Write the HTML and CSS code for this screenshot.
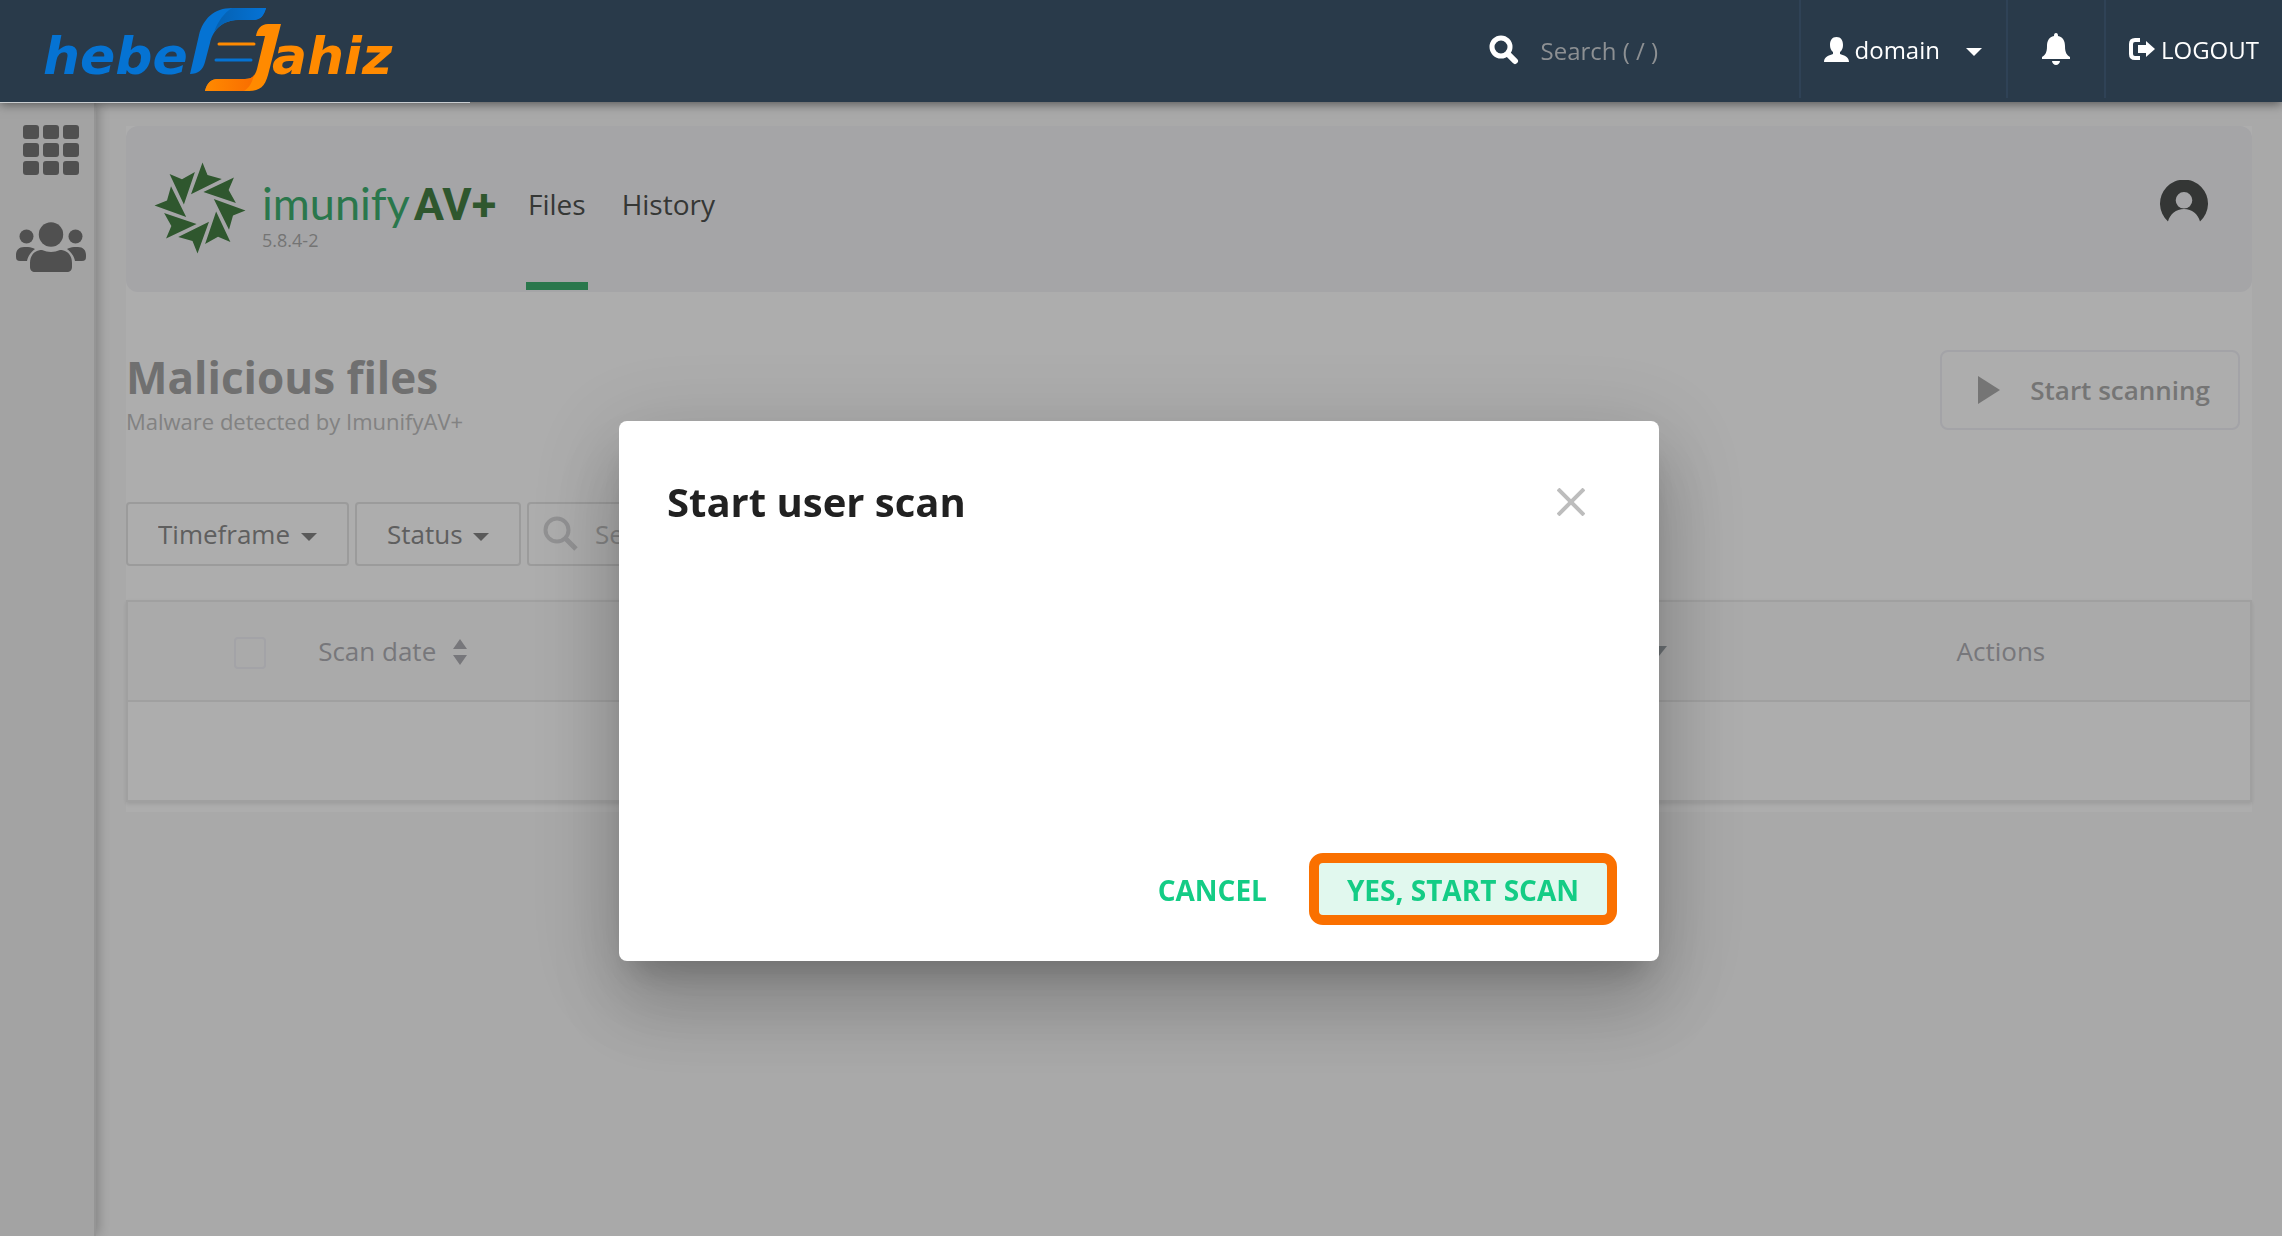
FILE: index.html
```html
<!DOCTYPE html>
<html lang="en">
<head>
    <meta charset="UTF-8">
    <meta name="viewport" content="width=device-width, initial-scale=1.0">
    <title>ImunifyAV+</title>
    <link rel="stylesheet" href="styles.css">
</head>
<body>
    <!-- Top bar -->
    <header class="topbar">
        <a href="#" class="brand" aria-label="hebel Jahiz">
            <svg width="470" height="102" viewBox="0 0 470 102">
                <defs>
                    <linearGradient id="blueFold" x1="0" x2="1"><stop offset="0" stop-color="#0560b0"/><stop offset="1" stop-color="#0573d6"/></linearGradient>
                    <linearGradient id="orangeFold" x1="0" x2="1"><stop offset="0" stop-color="#ff8a00"/><stop offset="1" stop-color="#f96d00"/></linearGradient>
                </defs>
                <text class="brand-text" x="43" y="74" fill="#0573d3">hebe</text>
                <path fill="#0573d3" d="M190 74 L199 35 C203 19 214 8 232 8 L266 8 C264 15 261 20 253 20 L238 20 C224 20 213 29 210 43 L205 62 C203 70 198 74 190 74Z"/>
                <path fill="url(#blueFold)" d="M232 8 L266 8 C264 15 261 20 253 20 L238 20 C228 20 220 24 214 32 C218 21 224 13 232 8Z"/>
                <path stroke="#ff8a00" stroke-width="3" stroke-linecap="round" d="M219 44H254"/>
                <path stroke="#0573d3" stroke-width="3" stroke-linecap="round" d="M216 60H251"/>
                <path fill="#ff8a00" d="M256 36 C257 29 261 24 268 24 L281 24 L268 75 C265 86 260 91 249 91 L205 91 C207 83 211 79 218 79 L245 79 C252 79 255 76 257 69 L265 36Z"/>
                <path fill="url(#orangeFold)" d="M218 79 L245 79 C249 79 252 78 254 75 C252 83 249 88 244 91 L205 91 C207 83 211 79 218 79Z"/>
                <text class="brand-text" x="272" y="74" fill="#ff8a00">ahiz</text>
            </svg>
        </a>
        <label class="top-search">
            <svg width="30" height="30" viewBox="0 0 30 30" fill="none" stroke="#fff"><circle cx="12" cy="12" r="9" stroke-width="5"/><path d="M19 19L26 26" stroke-width="6" stroke-linecap="round"/></svg>
            <input type="search" placeholder="Search ( / )" aria-label="Search">
        </label>
        <button class="top-item user-menu">
            <svg width="25" height="25" viewBox="0 0 25 25" fill="#fff"><path d="M12.500 0C17 0 19 3.500 19 8c0 3-1 5.500-3 7v2c3 1.500 9 2 9 8H0c0-6 6-6.500 9-8v-2c-2-1.500-3-4-3-7C6 3.500 8 0 12.500 0Z"/></svg>
            <span>domain</span>
            <svg class="caret" width="16" height="8" viewBox="0 0 16 8" fill="#fff"><path d="M0 0H16L8 8Z"/></svg>
        </button>
        <button class="top-item bell" aria-label="Notifications">
            <svg width="28" height="32" viewBox="0 0 28 32" fill="#fff"><path d="M14 0c1.500 0 2 1 2 3 5 1 7 5 7 10 0 7 2 9 5 11v2H0v-2c3-2 5-4 5-11 0-5 2-9 7-10 0-2 .5-3 2-3ZM10 28h8c0 2-2 4-4 4s-4-2-4-4Z"/></svg>
        </button>
        <a href="#" class="top-item logout">
            <svg width="26" height="22" viewBox="0 0 26 22"><path d="M11 2H6C3.500 2 2 3.500 2 6v10c0 2.500 1.500 4 4 4h5" fill="none" stroke="#fff" stroke-width="4"/><path d="M9 7h8V3l9 8-9 8v-4H9Z" fill="#fff"/></svg>
            <span>LOGOUT</span>
        </a>
    </header>

    <div class="layout">
        <!-- Sidebar -->
        <nav class="sidebar">
            <a href="#" aria-label="Tools">
                <svg width="56" height="50" viewBox="0 0 56 50" fill="#777">
                    <rect width="16" height="14" rx="3"/><rect x="20" width="16" height="14" rx="3"/><rect x="40" width="16" height="14" rx="3"/>
                    <rect y="18" width="16" height="14" rx="3"/><rect x="20" y="18" width="16" height="14" rx="3"/><rect x="40" y="18" width="16" height="14" rx="3"/>
                    <rect y="36" width="16" height="14" rx="3"/><rect x="20" y="36" width="16" height="14" rx="3"/><rect x="40" y="36" width="16" height="14" rx="3"/>
                </svg>
            </a>
            <a href="#" aria-label="User manager">
                <svg width="70" height="50" viewBox="0 0 70 50" fill="#777">
                    <circle cx="35" cy="12.500" r="12.200"/><circle cx="10.500" cy="14.500" r="7"/><circle cx="59.500" cy="14.500" r="7"/>
                    <path d="M8 25h4c3 0 5 1 7 2-4 3-7 7-8 12H4c-3 0-4-1.500-4-4v-2c0-5 3-8 8-8ZM62 25h-4c-3 0-5 1-7 2 4 3 7 7 8 12h7c3 0 4-1.500 4-4v-2c0-5-3-8-8-8Z"/>
                    <path d="M26 28c3 1 6 2 9 2s6-1 9-2c8 0 12 6 12 13v4c0 3-2 5-5 5H19c-3 0-5-2-5-5v-4c0-7 4-13 12-13Z"/>
                </svg>
            </a>
        </nav>

        <main class="main">
            <div class="page">
                <section class="av-header">
                    <svg class="av-star" width="92" height="92" viewBox="-46 -46 92 92" fill="#468045">
                        <path id="blade" d="M2.500-45.500L7.500-33L21.800-29L-9-13.800Z"/>
                        <use href="#blade" transform="rotate(45)"/><use href="#blade" transform="rotate(90)"/>
                        <use href="#blade" transform="rotate(135)"/><use href="#blade" transform="rotate(180)"/>
                        <use href="#blade" transform="rotate(225)"/><use href="#blade" transform="rotate(270)"/>
                        <use href="#blade" transform="rotate(315)"/>
                    </svg>
                    <div class="av-name">
                        <div class="av-title"><span class="av-imunify">imunify</span><span class="av-plus">AV+</span></div>
                        <div class="av-version">5.8.4-2</div>
                    </div>
                    <nav class="tabs">
                        <a href="#" class="tab active">Files</a>
                        <a href="#" class="tab">History</a>
                    </nav>
                    <button class="avatar" aria-label="Account">
                        <svg width="48" height="48" viewBox="0 0 48 48"><path fill="#4d504e" fill-rule="evenodd" d="M8 41.500A24 24 0 1 1 40 41.500C38 34 32 29 24 29S10 34 8 41.500ZM24 12A8.300 8.300 0 1 0 24 28.600A8.300 8.300 0 1 0 24 12Z"/></svg>
                    </button>
                </section>

                <div class="heading">
                    <div>
                        <h1>Malicious files</h1>
                        <p>Malware detected by ImunifyAV+</p>
                    </div>
                    <button class="scan-btn">
                        <svg width="22" height="28" viewBox="0 0 22 28" fill="#adadad"><path d="M0 0L22 14L0 28Z"/></svg>
                        <span>Start scanning</span>
                    </button>
                </div>

                <div class="filters">
                    <select class="filter" aria-label="Timeframe"><option>Timeframe</option></select>
                    <select class="filter" aria-label="Status"><option>Status</option></select>
                    <label class="filter-search">
                        <svg width="36" height="36" viewBox="0 0 36 36" fill="none" stroke="#d7d7d9"><circle cx="14" cy="14" r="11.500" stroke-width="4"/><path d="M22 22L33 33" stroke-width="5"/></svg>
                        <input type="search" placeholder="Search" aria-label="Search files">
                    </label>
                </div>

                <table class="files">
                    <thead>
                        <tr>
                            <th class="col-check"><input type="checkbox" aria-label="Select all"></th>
                            <th class="col-date">Scan date <svg width="14" height="26" viewBox="0 0 14 26" fill="#b0b0b5"><path d="M0 10L7 0L14 10ZM0 16H14L7 26Z"/></svg></th>
                            <th class="col-status"><svg width="16" height="10" viewBox="0 0 16 10" fill="#a0a8ad"><path d="M0 0H16L8 10Z"/></svg></th>
                            <th class="col-actions">Actions</th>
                        </tr>
                    </thead>
                    <tbody>
                        <tr><td colspan="4"></td></tr>
                    </tbody>
                </table>
            </div>
        </main>
    </div>

    <!-- Scan dialog -->
    <div class="backdrop">
        <div class="dialog" role="dialog" aria-labelledby="dialogTitle">
            <div class="dialog-head">
                <h2 id="dialogTitle">Start user scan</h2>
                <button class="close" aria-label="Close">
                    <svg width="28" height="28" viewBox="0 0 28 28" stroke="#bdbdbd" stroke-width="4"><path d="M1 1L27 27M27 1L1 27"/></svg>
                </button>
            </div>
            <div class="dialog-actions">
                <button class="cancel">CANCEL</button>
                <button class="confirm">YES, START SCAN</button>
            </div>
        </div>
    </div>
</body>
</html>
```

FILE: styles.css
```css
* {
    box-sizing: border-box;
}
body {
    margin: 0;
    min-height: 100vh;
    display: flex;
    flex-direction: column;
    font-family: "Open Sans", sans-serif;
    font-size: 26px;
    background: #fafafa;
}
button, input, select {
    font: inherit;
    border: none;
    background: none;
    padding: 0;
}
button {
    cursor: pointer;
}
a {
    text-decoration: none;
    color: inherit;
}
svg {
    display: block;
    flex: none;
}

/* Top bar */
.topbar {
    position: relative;
    z-index: 20;
    display: flex;
    height: 102px;
    background: #293a4a;
    color: #fff;
    font-size: 24px;
    box-shadow: 0 2px 10px rgba(0, 0, 0, 0.5);
}
.brand {
    margin-right: auto;
    height: 103px;
    border-bottom: 1px solid #c9cdd0;
}
.brand-text {
    font: italic bold 52px "DejaVu Sans", sans-serif;
}
.top-search {
    display: flex;
    align-items: center;
    gap: 22px;
    width: 310px;
    height: 100px;
}
.top-search input {
    width: 220px;
    color: #fff;
    outline: none;
}
.top-search input::placeholder {
    color: #8d9093;
}
.top-item {
    display: flex;
    align-items: center;
    height: 98px;
    padding: 0 23px;
    border-left: 2px solid #2f4256;
    color: #fff;
}
.user-menu {
    gap: 6px;
    padding-right: 24px;
}
.caret {
    margin: 6px 0 0 20px;
}
.bell {
    padding: 0 34px;
}
.logout {
    gap: 6px;
}

/* Sidebar */
.layout {
    flex: 1;
    display: flex;
}
.sidebar {
    width: 96px;
    padding: 23px 0 0 7px;
    display: flex;
    flex-direction: column;
    align-items: center;
    gap: 47px;
    background: #f1f1f1;
    border-right: 2px solid #dcdcdc;
    box-shadow: 2px 0 12px rgba(0, 0, 0, 0.25);
}

/* Page */
.main {
    flex: 1;
    padding: 24px 30px;
}
.page {
    background: #fff;
    padding-bottom: 10px;
}
.av-header {
    display: flex;
    height: 166px;
    padding: 0 44px 0 28px;
    background: #f4f4f7;
    border-radius: 12px;
}
.av-star {
    margin-top: 36px;
}
.av-name {
    width: 232px;
    margin: 50px 32px 0 16px;
}
.av-title {
    display: flex;
    align-items: baseline;
    gap: 4px;
    height: 52px;
    line-height: 54px;
}
.av-imunify {
    font-family: Lato, sans-serif;
    font-size: 45px;
    color: #3eb070;
}
.av-plus {
    font-family: Roboto, sans-serif;
    font-size: 45px;
    font-weight: bold;
    color: #468045;
}
.av-version {
    font-size: 18px;
    line-height: 24px;
    color: #acacac;
}
.tabs {
    display: flex;
    gap: 32px;
    padding-bottom: 2px;
}
.tab {
    padding: 59px 2px 0;
    font-size: 28px;
    line-height: 38px;
    color: #4f524f;
    border-bottom: 8px solid transparent;
}
.tab.active {
    border-color: #3eb070;
}
.avatar {
    align-self: flex-start;
    margin: 54px 0 0 auto;
}

.heading {
    display: flex;
    justify-content: space-between;
    align-items: flex-start;
    padding: 58px 12px 0 0;
    height: 210px;
}
.heading h1 {
    margin: 0;
    font-size: 44px;
    line-height: 54px;
    color: #a5a5a5;
}
.heading p {
    margin: 0;
    font-size: 22px;
    line-height: 34px;
    color: #c0c0c0;
}
.scan-btn {
    display: flex;
    align-items: center;
    gap: 30px;
    height: 80px;
    padding: 0 28px 0 36px;
    border: 2px solid #f0f0f6;
    border-radius: 8px;
    font-weight: 600;
    color: #adadad;
}

.filters {
    display: flex;
    gap: 6px;
    margin-bottom: 34px;
}
.filter, .filter-search {
    height: 64px;
    border: 2px solid #e5e5e5;
    border-radius: 4px;
}
.filter {
    appearance: none;
    padding: 0 56px 0 30px;
    color: #8c8c8c;
    background: url("data:image/svg+xml,%3Csvg xmlns='http://www.w3.org/2000/svg' width='16' height='8'%3E%3Cpath d='M0 0H16L8 8Z' fill='%23858585'/%3E%3C/svg%3E") no-repeat right 30px top 29px;
}
.filter-search {
    display: flex;
    align-items: center;
    gap: 16px;
    width: 520px;
    padding: 0 14px;
}
.filter-search input::placeholder {
    color: #c2c2c2;
}

.files {
    width: 100%;
    table-layout: fixed;
    border-collapse: collapse;
    border: 2px solid #ececec;
    box-shadow: 0 2px 4px rgba(0, 0, 0, 0.1);
    color: #b0b0b5;
}
.files th {
    height: 100px;
    padding: 0;
    background: #fbfbfb;
    border-bottom: 2px solid #ececec;
    font-weight: normal;
    text-align: left;
}
.files td {
    height: 100px;
}
.files svg {
    display: inline-block;
    margin-left: 10px;
    vertical-align: -4px;
}
.files input {
    display: block;
    appearance: none;
    width: 32px;
    height: 32px;
    margin: 4px 0 0 106px;
    border: 2px solid #f0f0f6;
    border-radius: 4px;
}
.col-check {
    width: 9%;
}
.col-status {
    width: 20%;
}
.files .col-status {
    padding-right: 11px;
    text-align: right;
}
.files .col-status svg {
    vertical-align: 5px;
}
.files .col-actions {
    width: 27%;
    padding-left: 279px;
}

/* Dialog */
.backdrop {
    position: fixed;
    inset: 0;
    z-index: 10;
    display: flex;
    justify-content: center;
    align-items: flex-start;
    padding: 421px 4px 0 0;
    background: rgba(0, 0, 0, 0.32);
}
.dialog {
    display: flex;
    flex-direction: column;
    justify-content: space-between;
    width: 1040px;
    min-height: 540px;
    padding: 54px 42px 36px 48px;
    background: #fff;
    border-radius: 8px;
    box-shadow: 0 22px 30px -14px rgba(0, 0, 0, 0.2),
        0 48px 76px 6px rgba(0, 0, 0, 0.14),
        0 18px 92px 16px rgba(0, 0, 0, 0.12);
}
.dialog-head {
    display: flex;
    justify-content: space-between;
    align-items: center;
    padding-right: 32px;
}
.dialog-head h2 {
    margin: 0;
    font-size: 40px;
    line-height: 54px;
    color: #212121;
}
.dialog-actions {
    display: flex;
    justify-content: flex-end;
    gap: 42px;
    font-size: 28px;
    font-weight: bold;
}
.dialog-actions button {
    padding-top: 2px;
    color: #14cc85;
}
.dialog-actions .confirm {
    height: 72px;
    padding: 2px 28px 0;
    border: 10px solid #fa7000;
    border-radius: 14px;
    background: #e1f8ee;
}
```
